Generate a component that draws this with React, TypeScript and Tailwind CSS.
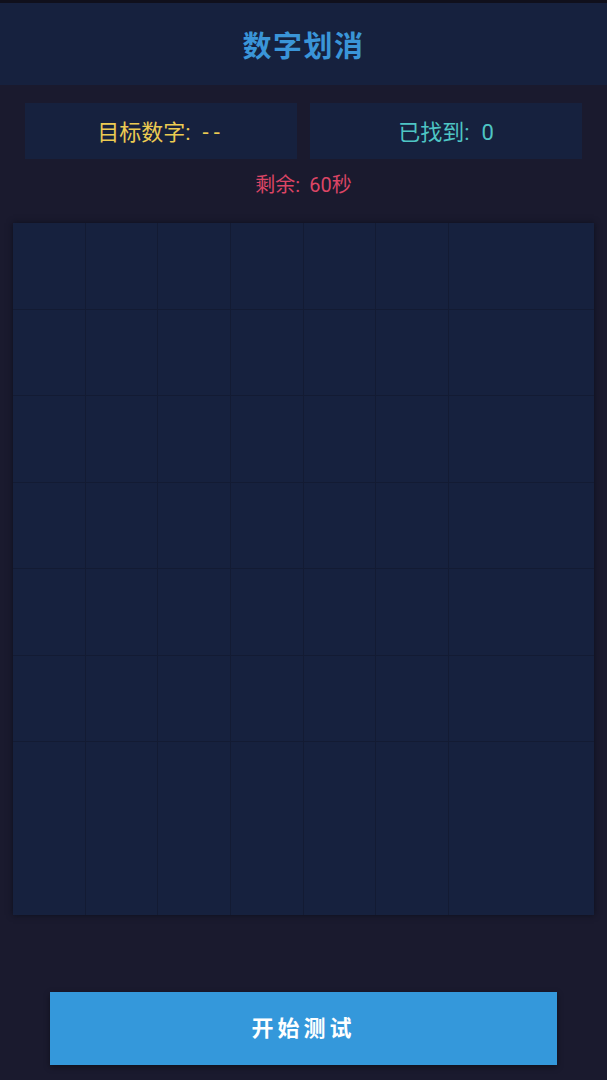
const ROWS = 8;
const COLS = 8;

const cells = Array.from({ length: ROWS * COLS }, (_, i) => i);

export default function App() {
  return (
    <div
      className="flex flex-col w-[607px] h-[1080px] bg-[#1a1a2e] border-t-[3px] border-[#10101c]"
      style={{ fontFamily: 'Roboto, "Noto Sans CJK SC", sans-serif' }}
    >
      {/* Header */}
      <div className="flex items-center justify-center h-[82px] pt-[7px] bg-[#16213e]">
        <h1 className="text-[29px] font-semibold text-[#3a95d8] tracking-[1.5px]">数字划消</h1>
      </div>

      {/* Stats */}
      <div className="grid grid-cols-2 gap-[13px] px-[25px] mt-[18px]">
        <div className="flex items-center justify-center h-[56px] pt-[2px] bg-[#16213e] text-[22px] text-[#eccb52]">
          <span>目标数字:</span>
          <span className="ml-[12px] tracking-[5px]">--</span>
        </div>
        <div className="flex items-center justify-center h-[56px] pt-[2px] bg-[#16213e] text-[22px] text-[#4ec5c4]">
          <span>已找到:</span>
          <span className="ml-[12px]">0</span>
        </div>
      </div>

      <div className="flex justify-center mt-[11px] text-[20px] text-[#dc4565]">
        <span>剩余:</span>
        <span className="ml-[9px]">60秒</span>
      </div>

      {/* Board */}
      <div className="mx-[13px] mt-[23px] h-[692px] grid grid-cols-8 grid-rows-8 bg-[#16213e] shadow-[0_0_6px_rgba(10,12,24,0.8)]">
        {cells.map((i) => {
          const row = Math.floor(i / COLS);
          const col = i % COLS;
          const right = col < COLS - 2;
          const bottom = row < ROWS - 2;
          return (
            <div
              key={i}
              className={
                (right ? "border-r border-r-[#131b33] " : "") +
                (bottom ? "border-b border-b-[#131b33] " : "") +
                "bg-[#16213e]"
              }
            />
          );
        })}
      </div>

      {/* Start button */}
      <div className="flex justify-center mt-[77px]">
        <button className="w-[507px] h-[73px] bg-[#3498db] text-white text-[22px] font-semibold tracking-[4px] shadow-[0_2px_6px_rgba(0,0,0,0.4)]">
          开始测试
        </button>
      </div>
    </div>
  );
}
